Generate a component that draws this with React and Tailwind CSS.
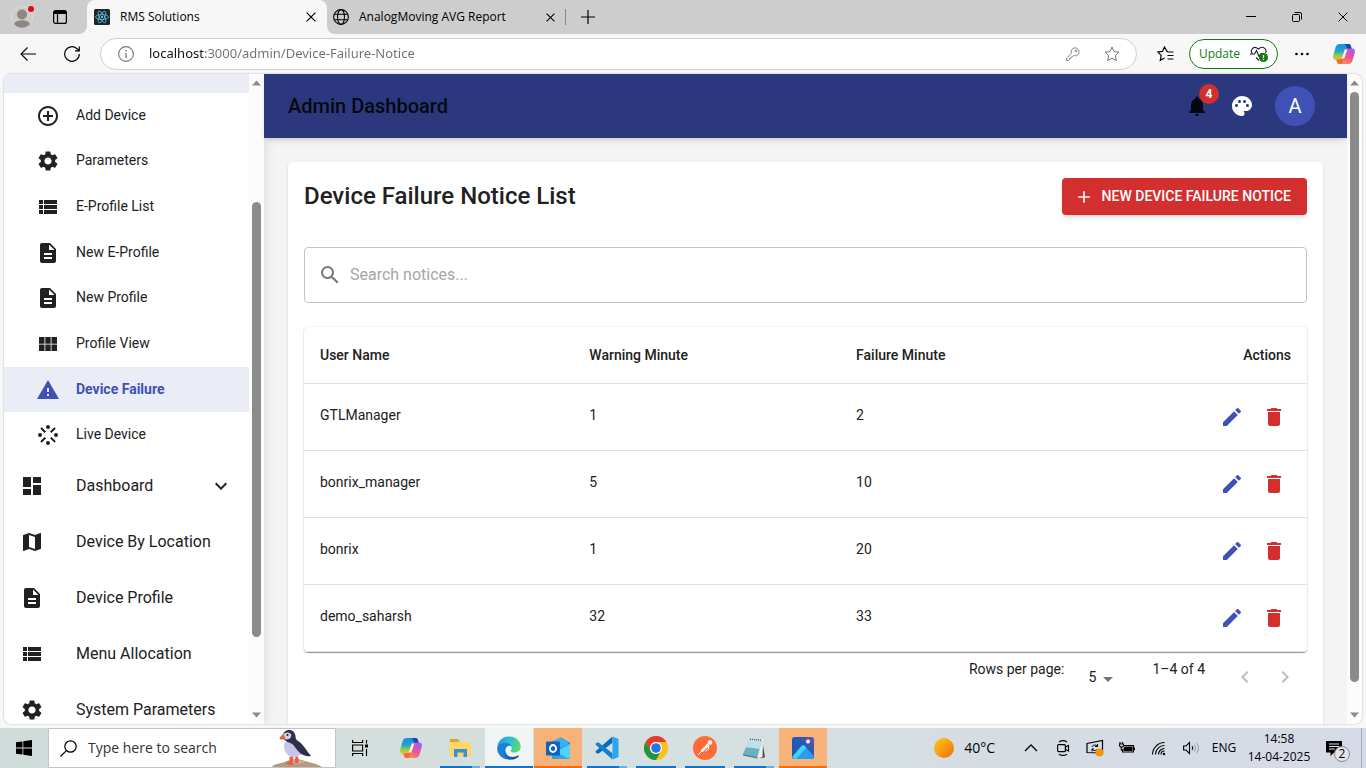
import React, { useState } from "react";
import {
  MdAdd,
  MdAddCircleOutline,
  MdArrowDropDown,
  MdDashboard,
  MdDelete,
  MdDescription,
  MdEdit,
  MdExpandMore,
  MdKeyboardArrowLeft,
  MdKeyboardArrowRight,
  MdMap,
  MdNotifications,
  MdPalette,
  MdSearch,
  MdSettings,
  MdStream,
  MdViewList,
  MdWarning,
} from "react-icons/md";

// Module grid with the narrow gutters
const ModuleIcon = ({ className }) => (
  <svg viewBox="0 0 24 24" fill="currentColor" className={className} aria-hidden="true">
    <path d="M3 5h5.500v6.700H3zM9.300 5h5.400v6.700H9.300zM15.500 5H21v6.700h-5.500zM3 12.500h5.500V19H3zM9.300 12.500h5.400V19H9.300zM15.500 12.500H21V19h-5.500z" />
  </svg>
);

// Row list with the narrow left column
const ListIcon = ({ className }) => (
  <svg viewBox="0 0 24 24" fill="currentColor" className={className} aria-hidden="true">
    <path d="M3 14h4v-4H3v4zm0 5h4v-4H3v4zM3 9h4V5H3v4zm5 5h13v-4H8v4zm0 5h13v-4H8v4zM8 5v4h13V5H8z" />
  </svg>
);

const SUB_MENU = [
  { name: "Add Device", icon: MdAddCircleOutline },
  { name: "Parameters", icon: MdSettings },
  { name: "E-Profile List", icon: ListIcon },
  { name: "New E-Profile", icon: MdDescription },
  { name: "New Profile", icon: MdDescription },
  { name: "Profile View", icon: ModuleIcon },
  { name: "Device Failure", icon: MdWarning, active: true },
  { name: "Live Device", icon: MdStream },
];

const MAIN_MENU = [
  { name: "Dashboard", icon: MdDashboard, expandable: true },
  { name: "Device By Location", icon: MdMap },
  { name: "Device Profile", icon: MdDescription },
  { name: "Menu Allocation", icon: MdViewList },
  { name: "System Parameters", icon: MdSettings },
];

const NOTICES = [
  { user: "GTLManager", warning: 1, failure: 2 },
  { user: "bonrix_manager", warning: 5, failure: 10 },
  { user: "bonrix", warning: 1, failure: 20 },
  { user: "demo_saharsh", warning: 32, failure: 33 },
];

/* ---------- Small drawings ---------- */

const Line = ({ size = 16, box = 16, width = 1, className = "", children }) => (
  <svg
    width={size}
    height={size}
    viewBox={`0 0 ${box} ${box}`}
    fill="none"
    stroke="currentColor"
    strokeWidth={width}
    className={`shrink-0 ${className}`}
    aria-hidden="true"
  >
    {children}
  </svg>
);

const CloseIcon = ({ size = 10, width = 1.2 }) => (
  <Line size={size} box={10} width={width}>
    <path d="M0.6 0.6l8.8 8.8M9.4 0.6L0.6 9.4" />
  </Line>
);

const ReactLogo = () => (
  <svg width="16" height="16" viewBox="0 0 16 16" fill="none" stroke="#58c4dc" strokeWidth="0.8" className="shrink-0" aria-hidden="true">
    <rect width="16" height="16" rx="1.5" fill="#20232a" stroke="none" />
    <ellipse cx="8" cy="8" rx="6.5" ry="2.5" />
    <ellipse cx="8" cy="8" rx="6.5" ry="2.5" transform="rotate(60 8 8)" />
    <ellipse cx="8" cy="8" rx="6.5" ry="2.5" transform="rotate(120 8 8)" />
    <circle cx="8" cy="8" r="1.2" fill="#58c4dc" stroke="none" />
  </svg>
);

const CopilotLogo = ({ id }) => (
  <svg width="24" height="24" viewBox="0 0 24 24" className="shrink-0" aria-hidden="true">
    <defs>
      <linearGradient id={`${id}-a`} x1="0" y1="0" x2="0" y2="1">
        <stop offset="0" stopColor="#1b8ce8" />
        <stop offset="0.45" stopColor="#22a7c9" />
        <stop offset="0.7" stopColor="#8ecb4a" />
        <stop offset="1" stopColor="#f6c21c" />
      </linearGradient>
      <linearGradient id={`${id}-b`} x1="0.7" y1="0" x2="0.2" y2="1">
        <stop offset="0" stopColor="#a35cf0" />
        <stop offset="0.5" stopColor="#f0568c" />
        <stop offset="1" stopColor="#ff9a4a" />
      </linearGradient>
    </defs>
    <path d="M8 2h8.500c1.300 0 2 .8 2.400 2l.8 3h-3.200c-1.500 0-2.300.8-2.700 2.200L12 15.500C11.300 17.500 10.300 18 8.500 18H4C1.500 18 .6 16.200 1.300 13.500l2.200-8C4.200 3 5.500 2 8 2z" fill={`url(#${id}-a)`} />
    <path d="M13.500 2h3c1.300 0 2 .8 2.400 2l.8 3h-4.500c-1-3-1.300-5-4.200-5z" fill="#1748b0" />
    <path d="M16 22H7.500c-1.300 0-2-.8-2.400-2l-.8-2.500h3.200c1.500 0 2.300-.8 2.700-2.200L12 9c.7-2 1.700-2.500 3.500-2.500H20c2.500 0 3.400 1.800 2.700 4.500l-2.200 7.500C19.800 21 18.500 22 16 22z" fill={`url(#${id}-b)`} />
    <path d="M4.300 17.500h3.200c1.500 0 2.300-.8 2.700-2.200l.8-2.300c0 4 .5 9-3 9-1.600 0-2.500-.5-2.900-2z" fill="#f0683c" />
    <path d="M12.800 7.500h2.600l-3.200 9H8.600c1-.4 1.400-.9 1.700-1.800z" fill="#f7f7f7" />
  </svg>
);

const ExplorerLogo = () => (
  <svg width="24" height="24" viewBox="0 0 24 24" aria-hidden="true">
    <path d="M2 3h8l2 3h10v4H2z" fill="#e0a526" />
    <path d="M1.500 6H23v14H1.500z" fill="#ffd766" />
    <path d="M6 13h13v8h-3.500v-4.500h-6V21H6z" fill="#3b8fd9" />
  </svg>
);

const EdgeLogo = () => (
  <svg width="24" height="24" viewBox="0 0 24 24" aria-hidden="true">
    <defs>
      <linearGradient id="edge-top" x1="0" y1="0.3" x2="1" y2="0.5">
        <stop offset="0" stopColor="#1f9bde" />
        <stop offset="0.55" stopColor="#2fc3cf" />
        <stop offset="1" stopColor="#62dd5a" />
      </linearGradient>
      <linearGradient id="edge-low" x1="0" y1="0" x2="1" y2="1">
        <stop offset="0" stopColor="#1b82d6" />
        <stop offset="1" stopColor="#114a8b" />
      </linearGradient>
    </defs>
    <path d="M0.300 11C1 5 5.500 0.500 12 0.500c7 0 11.700 4.800 11.700 10 0 3.700-2.800 6-6 6-2.500 0-4-1-4-1.800 0-.6 1-1 1-2.900 0-2.200-2.200-4.300-5.700-4.300C5 7.500 1.500 9 0.300 11z" fill="url(#edge-top)" />
    <path d="M0.300 11.500C1 8.500 4.500 7 8.500 7c3.500 0 5.800 1.800 6.200 4-.8-1-1.900-1.500-3-1.300-3.400.8-4.400 5.300-2 8.800 2.600 3.800 7.800 3.500 11.600 1C19 22 16 23.500 12 23.500 4.800 23.500-.5 17.500.3 11.500z" fill="#1b7fd3" />
    <path d="M8.500 11.500c-1.500 4 .5 8.500 5 9.300 3 .5 5.800-.3 7.800-1.300.7-.3 1 .2.600.7C19.500 23 16 24 12.500 23.500 7 22 5 15 8.500 11.500z" fill="url(#edge-low)" />
  </svg>
);

const OutlookLogo = () => (
  <svg width="26" height="24" viewBox="0 0 26 24" aria-hidden="true">
    <path d="M7 6l9-4.500L25 7v14c0 1-.6 1.600-1.600 1.600H8.500C7.500 22.600 7 22 7 21z" fill="#1467b8" />
    <path d="M9 5l7-3.500L23.500 6v8L16 17z" fill="#37b2ee" />
    <path d="M7 13l18-5.500V21c0 1-.6 1.600-1.600 1.600H8.500C7.500 22.600 7 22 7 21z" fill="#28a8ea" />
    <path d="M25 8v13c0 1-.6 1.600-1.600 1.600L11 16z" fill="#50d0fa" />
    <rect x="1" y="5.500" width="14" height="14" rx="1.200" fill="#0f63bd" />
    <ellipse cx="8" cy="12.500" rx="3.100" ry="3.500" fill="none" stroke="#fff" strokeWidth="1.800" />
  </svg>
);

const VsCodeLogo = () => (
  <svg width="24" height="24" viewBox="0 0 24 24" aria-hidden="true">
    <path d="M17.500 0.500v6.300L3.300 17.800 0.600 16.400v-1.200z" fill="#0a6ab5" />
    <path d="M17.500 23.500v-6.300L3.300 6.200 0.600 7.600v1.200z" fill="#1181cc" />
    <path d="M17.500 0.500L23.500 3v18l-6 2.500z" fill="#2ba5f0" />
  </svg>
);

const ChromeLogo = () => (
  <svg width="24" height="24" viewBox="0 0 24 24" aria-hidden="true">
    <circle cx="12" cy="12" r="12" fill="#fbc116" />
    <path d="M1.600 6A12 12 0 0 1 22.400 6H12a6 6 0 0 0-5.200 9z" fill="#e33b2e" />
    <path d="M1.600 6A12 12 0 0 0 12 24l5.200-9A6 6 0 0 1 6.800 15z" fill="#229342" />
    <circle cx="12" cy="12" r="6" fill="#fff" />
    <circle cx="12" cy="12" r="4.800" fill="#2b72e8" />
  </svg>
);

const PostmanLogo = () => (
  <svg width="24" height="24" viewBox="0 0 24 24" aria-hidden="true">
    <circle cx="12" cy="12" r="12" fill="#ff6c37" />
    <circle cx="17" cy="6.500" r="2.300" fill="#fff" />
    <path d="M14.500 7.500l2 2-6.500 6.200-2.300.4.500-2.100z" fill="#fff" />
    <path d="M15 9.500l.8 3.300-3.300 2.500M8 16l-3 3" fill="none" stroke="#fff" strokeWidth="1" />
  </svg>
);

const NotepadLogo = () => (
  <svg width="24" height="24" viewBox="0 0 24 24" aria-hidden="true">
    <path d="M20 4l3 17-2 1-4-1z" fill="#5a4a38" />
    <path d="M9 2.500l12 1L20.500 21l-5 .5z" fill="#eceff0" />
    <path d="M7.500 3l12.500 1-4.500 17L1 18z" fill="#6fafc2" />
    <path d="M7.500 3l12.500 1-2.500 9-14-2z" fill="#c3e0e8" />
    <path d="M1 18l14.500 3-.5 1.500L1 19.500z" fill="#3f7f93" />
    <path d="M8 3.200l12 1" stroke="#4a5358" strokeWidth="1.200" strokeDasharray="1 1" />
  </svg>
);

const PhotosLogo = () => (
  <svg width="22" height="22" viewBox="0 0 22 22" aria-hidden="true">
    <defs>
      <linearGradient id="photos-bg" x1="0" y1="1" x2="1" y2="0">
        <stop offset="0" stopColor="#1359b5" />
        <stop offset="0.6" stopColor="#2559b4" />
        <stop offset="1" stopColor="#7a4fae" />
      </linearGradient>
    </defs>
    <rect width="22" height="22" rx="2.500" fill="url(#photos-bg)" />
    <path d="M0.500 19.500L9.500 9c1-1.100 2.300-1.100 3.300 0L22 19c-.4 2-1.200 3-3 3H3c-1.500 0-2.500-1-2.500-2.500z" fill="#2b9df0" />
    <path d="M0.500 19.500L9.500 9c1-1.100 2.300-1.100 3.300 0l1.700 1.800L4 22H3c-1.500 0-2.500-1-2.500-2.500z" fill="#43d0f2" />
    <circle cx="16" cy="4.500" r="2" fill="#fff" />
  </svg>
);

const Puffin = () => (
  <svg width="54" height="38" viewBox="0 0 54 38" className="shrink-0" aria-hidden="true">
    <path d="M0 38c2-4 10-3 15-6 6-2.500 13-2 18 0 6 2 13 3 17 6z" fill="#b39a80" />
    <path d="M17 32c6-2 12-1 16 1l-8 2z" fill="#cdb79e" />
    <path d="M13 13c-2 4-1 10 3 13 4 3 9 3 12 0l7-1-6-11-9-5z" fill="#c5c6ea" />
    <path d="M11 6c1-6 10-7 12-1 1 3 0 5 3 7 6 4 8 9 13 15-4 1-9-1-12-4-4-4-5-8-10-9.500C13 12 11 10 11 6z" fill="#2d3048" />
    <path d="M11 6.500c1-3.500 6-4 8-1.500 1 2.500-1 5.500-4 5.500-2 0-4-1-4-4z" fill="#d3cfe8" />
    <circle cx="15.500" cy="6" r="1" fill="#1d1d28" />
    <path d="M11.500 5.500C9.500 6 8 7.500 7.500 10c2 .8 4.500.7 6-.5z" fill="#ee5a3a" />
    <path d="M18 28v4.500l-4 2 6 1 1-7zM24 28l-1 5 3 1v-5.500z" fill="#f05a40" stroke="#f05a40" />
  </svg>
);

/* ---------- Browser frame ---------- */

const TabStrip = () => (
  <div className="flex h-[34px] shrink-0 bg-[#f7f7f7] text-xs text-black">
    <div className="flex w-[87px] shrink-0 items-center gap-5 rounded-br-lg bg-[#cdcdcd] pl-[11px]">
      <button type="button" aria-label="Profile" className="relative">
        <svg width="22" height="22" viewBox="0 0 22 22" aria-hidden="true">
          <circle cx="11" cy="11" r="10.500" fill="#cfccc8" stroke="#dedbd7" />
          <circle cx="11" cy="8.500" r="5" fill="#8b8783" />
          <path d="M3 18c2-5 14-5 16 0-4 5-12 5-16 0z" fill="#8b8783" />
        </svg>
        <span className="absolute top-0 -right-px h-[6px] w-[6px] rounded-full bg-[#e50914]" />
      </button>
      <button type="button" aria-label="Tab actions">
        <Line size={14} box={14} width={1.200}>
          <rect x="0.600" y="0.600" width="12.800" height="12.800" rx="2" />
          <path d="M1 2.500h12" strokeWidth="3" />
          <path d="M4.500 3v10" />
        </Line>
      </button>
    </div>
    <div className="w-[240px] shrink-0 bg-[#cdcdcd]">
      <div className="flex h-full items-center rounded-t-lg bg-[#f7f7f7] pr-[11px] pl-[7px]">
        <ReactLogo />
        <span className="flex-1 truncate pl-[10px]">RMS Solutions</span>
        <button type="button" aria-label="Close tab">
          <CloseIcon />
        </button>
      </div>
    </div>
    <div className="flex min-w-0 flex-1 items-center rounded-bl-lg bg-[#cdcdcd]">
      <div className="flex w-[239px] shrink-0 items-center border-r border-[#8a8a8a] pr-[10px] pl-[6px]">
        <Line width={1.100}>
          <circle cx="8" cy="8" r="7.400" />
          <ellipse cx="8" cy="8" rx="3.500" ry="7.400" />
          <path d="M1.300 5.300h13.400M1.300 10.700h13.400" />
        </Line>
        <span className="flex-1 truncate pl-[10px]">AnalogMoving AVG Report</span>
        <button type="button" aria-label="Close tab">
          <CloseIcon size={9} />
        </button>
      </div>
      <button type="button" aria-label="New tab" className="ml-[15px]">
        <Line size={14} box={14} width={1.200}>
          <path d="M7 0v14M0 7h14" />
        </Line>
      </button>
      <div className="ml-auto flex h-full">
        <button type="button" aria-label="Minimize" className="flex w-[46px] items-center justify-center">
          <Line size={10} box={10}>
            <path d="M0 4.500h10" />
          </Line>
        </button>
        <button type="button" aria-label="Restore" className="flex w-[46px] items-center justify-center">
          <Line size={10} box={10}>
            <rect x="0.500" y="2.500" width="7" height="7" rx="1" />
            <path d="M2.500 0.500h5.500a1.500 1.500 0 0 1 1.500 1.500v5.500" />
          </Line>
        </button>
        <button type="button" aria-label="Close" className="flex w-[46px] items-center justify-center">
          <CloseIcon width={1} />
        </button>
      </div>
    </div>
  </div>
);

const STAR = "M8 1l2.100 4.600 4.900.6-3.600 3.400.9 5L8 12.200 3.700 14.600l.9-5L1 6.200l4.900-.6z";

const AddressBar = () => (
  <div className="flex h-10 shrink-0 items-center bg-[#f7f7f7]">
    <button type="button" aria-label="Back" className="ml-5">
      <Line width={1.100}>
        <path d="M16 8H1M7.500 1.500L1 8l6.500 6.500" />
      </Line>
    </button>
    <button type="button" aria-label="Reload" className="ml-7">
      <Line width={1.200}>
        <path d="M15.300 8A7.300 7.300 0 1 1 13 2.700L15 4.700M15.300 0.500v4.300H11" />
      </Line>
    </button>
    <div className="ml-5 flex h-8 min-w-0 flex-1 items-center rounded-full border border-[#cfcfcf] bg-white pr-4 pl-[17px] text-[#767676]">
      <Line width={1.100}>
        <circle cx="8" cy="8" r="7.400" />
        <path d="M8 7v5M8 4v1.500" strokeWidth="1.300" />
      </Line>
      <input
        type="text"
        aria-label="Address"
        defaultValue="localhost:3000/admin/Device-Failure-Notice"
        className="ml-[15px] min-w-0 flex-1 bg-[linear-gradient(90deg,#111111_56px,#707070_56px)] bg-clip-text font-['Noto_Sans',sans-serif] text-[13px] text-transparent outline-none"
      />
      <button type="button" aria-label="Saved passwords" className="text-[#8a8a8a]">
        <Line size={14} box={14}>
          <path d="M9 0.800a4 4 0 1 1-1.500 7.700L6 10H4.800v1.300H3.500v1.200L2.500 13.500H0.600v-2.300L5.500 6.300A4 4 0 0 1 9 0.800z" />
          <circle cx="10" cy="4" r="0.900" />
        </Line>
      </button>
      <button type="button" aria-label="Add to favorites" className="ml-6">
        <Line>
          <path d={STAR} />
        </Line>
      </button>
    </div>
    <button type="button" aria-label="Favorites" className="ml-5">
      <Line size={17} box={17} width={1.200}>
        <path d="M11 5.600l-.9-.1L7.500 1 5.400 5.400.8 6l3.400 3.400-.9 4.900 4.200-2.300M10.500 6h6M10.500 9.500h6M10.500 13h6" />
      </Line>
    </button>
    <button
      type="button"
      className="ml-[15px] flex h-[30px] w-[89px] items-center justify-center gap-[10px] rounded-full border border-[#107c10] bg-white text-xs text-[#107c10]"
    >
      Update
      <svg width="18" height="16" viewBox="0 0 18 16" fill="none" stroke="#222" strokeWidth="1.100" aria-hidden="true">
        <path d="M9 14.500L6 11.500M2.500 7.800C-.5 4.500 3.500-1.200 8.300 3c4.700-4.200 9.200.5 7.200 4" />
        <path d="M0 8h4.500L6.500 4.500l2.500 6 2-3h1.500" />
        <circle cx="13.500" cy="11.500" r="4.500" fill="#107c10" stroke="none" />
        <path d="M13.500 9v3M13.500 13v1" stroke="#fff" strokeWidth="1.300" />
      </svg>
    </button>
    <button type="button" aria-label="Settings and more" className="ml-4">
      <svg width="16" height="4" viewBox="0 0 16 4" aria-hidden="true">
        <circle cx="2.500" cy="2" r="1.300" />
        <circle cx="8" cy="2" r="1.300" />
        <circle cx="13.500" cy="2" r="1.300" />
      </svg>
    </button>
    <button type="button" aria-label="Copilot" className="mr-[10px] ml-[22px]">
      <CopilotLogo id="cp-bar" />
    </button>
  </div>
);

// before / thumb / after are shares of the track height
const ScrollBar = ({ before, thumb, after }) => (
  <div className="flex w-[15px] shrink-0 flex-col items-center bg-[#fcfcfc] py-[6px]" aria-hidden="true">
    <svg width="9" height="6" viewBox="0 0 9 6" className="mb-[6px] shrink-0">
      <path d="M0 5.500L4.500 0.500 9 5.500z" fill="#8b8b8b" />
    </svg>
    <div className="flex w-[9px] flex-1 flex-col">
      <div style={{ flexGrow: before }} />
      <div className="rounded-full bg-[#8b8b8b]" style={{ flexGrow: thumb }} />
      <div style={{ flexGrow: after }} />
    </div>
    <svg width="9" height="6" viewBox="0 0 9 6" className="mt-[6px] shrink-0">
      <path d="M0 0.500L4.500 5.500 9 0.500z" fill="#8b8b8b" />
    </svg>
  </div>
);

/* ---------- Admin app ---------- */

const Sidebar = () => (
  <aside className="z-10 flex shrink-0 bg-white shadow-[0_0_12px_rgba(0,0,0,0.12)]">
    <nav className="w-[245px] overflow-hidden text-[#212121]">
      <div className="h-[19px] bg-[#eaecf6]" />
      <ul className="grid h-[365px] auto-rows-fr">
        {SUB_MENU.map(({ name, icon: Icon, active }) => (
          <li key={name} className="flex">
            <a
              href="#"
              className={`flex flex-1 items-center gap-4 pl-8 text-sm ${
                active ? "bg-[#eaecf6] font-bold text-[#3f51b5]" : ""
              }`}
            >
              <Icon className="h-6 w-6 shrink-0" />
              <span className="pb-[2px]">{name}</span>
            </a>
          </li>
        ))}
      </ul>
      <ul>
        {MAIN_MENU.map(({ name, icon: Icon, expandable }) => (
          <li key={name}>
            <a href="#" className="flex h-14 items-center px-4 text-base">
              <Icon className="mr-8 h-6 w-6 shrink-0" />
              <span className="flex-1 whitespace-nowrap">{name}</span>
              {expandable && <MdExpandMore className="h-6 w-6 shrink-0" />}
            </a>
          </li>
        ))}
      </ul>
    </nav>
    <ScrollBar before={110} thumb={435} after={69} />
  </aside>
);

const AppHeader = () => (
  <header className="z-20 flex h-16 shrink-0 items-center bg-[#2b387e] pr-8 pl-6 shadow-md">
    <h1 className="flex-1 text-xl font-medium text-[#060811]">Admin Dashboard</h1>
    <div className="flex items-center gap-[21px]">
      <button type="button" aria-label="Notifications" className="relative text-[#060811]">
        <MdNotifications className="h-6 w-6" />
        <span className="absolute -top-[10px] -right-[10px] flex h-5 w-5 items-center justify-center rounded-full bg-[#d32f2f] text-xs font-bold text-white">
          4
        </span>
      </button>
      <button type="button" aria-label="Theme" className="text-white">
        <MdPalette className="h-6 w-6" />
      </button>
      <button
        type="button"
        className="flex h-10 w-10 items-center justify-center rounded-full bg-[#3f51b5] text-xl text-white"
      >
        A
      </button>
    </div>
  </header>
);

const NoticeTable = ({ rows }) => (
  <div className="mt-6 rounded shadow-[0_1px_1px_rgba(0,0,0,0.4),0_0_2px_rgba(0,0,0,0.16)]">
    <table className="w-full table-fixed border-collapse text-left text-sm">
      <thead>
        <tr className="h-14 border-b border-[#e0e0e0]">
          <th className="w-[26.85%] px-4 font-medium">User Name</th>
          <th className="w-[26.6%] px-4 font-medium">Warning Minute</th>
          <th className="px-4 font-medium">Failure Minute</th>
          <th className="px-4 text-right font-medium">Actions</th>
        </tr>
      </thead>
      <tbody>
        {rows.map((row) => (
          <tr key={row.user} className="h-[67px] border-b border-[#e0e0e0]">
            <td className="px-4 pb-1">{row.user}</td>
            <td className="px-4 pb-1">{row.warning}</td>
            <td className="px-4 pb-1">{row.failure}</td>
            <td className="px-4">
              <div className="flex justify-end gap-2">
                <button type="button" aria-label={`Edit ${row.user}`} className="p-[5px] text-[#3f51b5]">
                  <MdEdit className="h-6 w-6" />
                </button>
                <button type="button" aria-label={`Delete ${row.user}`} className="p-[5px] text-[#d32f2f]">
                  <MdDelete className="h-6 w-6" />
                </button>
              </div>
            </td>
          </tr>
        ))}
      </tbody>
    </table>
  </div>
);

const Pagination = ({ count }) => (
  <div className="flex h-[50px] items-center justify-end pr-[2px] text-sm">
    <label htmlFor="rows-per-page" className="mb-4">
      Rows per page:
    </label>
    <div className="relative mr-8 ml-2">
      <select id="rows-per-page" defaultValue="5" className="w-12 appearance-none bg-transparent pl-4 outline-none">
        <option>5</option>
        <option>10</option>
        <option>25</option>
      </select>
      <MdArrowDropDown className="pointer-events-none absolute top-0 right-0 h-6 w-6 text-[#757575]" />
    </div>
    <span className="mr-5 mb-4">{`1–${count} of ${count}`}</span>
    <button type="button" aria-label="Previous page" disabled className="p-2 text-[#bdbdbd]">
      <MdKeyboardArrowLeft className="h-6 w-6" />
    </button>
    <button type="button" aria-label="Next page" disabled className="p-2 text-[#bdbdbd]">
      <MdKeyboardArrowRight className="h-6 w-6" />
    </button>
  </div>
);

const FailureNotices = () => {
  const [query, setQuery] = useState("");
  const rows = NOTICES.filter((n) => n.user.toLowerCase().includes(query.toLowerCase()));

  return (
    <section className="flex-1 rounded-t bg-white p-4 shadow-sm">
      <div className="flex h-[37px] items-center justify-between">
        <h2 className="pb-[2px] text-2xl font-medium">Device Failure Notice List</h2>
        <button
          type="button"
          className="flex h-[37px] items-center gap-2 rounded bg-[#d32f2f] pr-4 pl-3 text-sm font-medium text-white uppercase shadow-md"
        >
          <MdAdd className="h-5 w-5" />
          <span className="pb-[2px]">New Device Failure Notice</span>
        </button>
      </div>
      <label className="mt-8 flex h-14 items-center gap-2 rounded border border-[#c4c4c4] px-[13px]">
        <MdSearch className="h-6 w-6 text-[#757575]" />
        <input
          type="text"
          aria-label="Search notices"
          placeholder="Search notices..."
          value={query}
          onChange={(e) => setQuery(e.target.value)}
          className="min-w-0 flex-1 text-base outline-none placeholder:text-[#a6a6a6]"
        />
      </label>
      <NoticeTable rows={rows} />
      <Pagination count={rows.length} />
    </section>
  );
};

/* ---------- Desktop taskbar ---------- */

const TASKS = [
  { name: "Copilot", logo: <CopilotLogo id="cp-task" />, bar: "" },
  { name: "File Explorer", logo: <ExplorerLogo />, bar: "mx-1 border-r-8 border-[#6aaee4] bg-[#0b74d1]" },
  { name: "Edge", logo: <EdgeLogo />, bg: "bg-[#f0f4f4]", bar: "bg-[#0b74d1]" },
  { name: "Outlook", logo: <OutlookLogo />, bg: "bg-[#f7b27a]", bar: "bg-[#f76b0a]" },
  { name: "VS Code", logo: <VsCodeLogo />, bar: "mx-1 border-r-8 border-[#6aaee4] bg-[#0b74d1]" },
  { name: "Chrome", logo: <ChromeLogo />, bar: "mx-1 bg-[#0b74d1]" },
  { name: "Postman", logo: <PostmanLogo />, bar: "mx-1 bg-[#0b74d1]" },
  { name: "Notepad", logo: <NotepadLogo />, bar: "mx-1 border-r-8 border-[#6aaee4] bg-[#0b74d1]" },
  { name: "Photos", logo: <PhotosLogo />, bg: "bg-[#f7b27a]", bar: "bg-[#f76b0a]" },
];

const TRAY = [
  {
    name: "Show hidden icons",
    icon: (
      <Line width={1.300}>
        <path d="M2 11l6-6 6 6" />
      </Line>
    ),
  },
  {
    name: "Meet now",
    icon: (
      <Line width={1.200}>
        <rect x="2.600" y="4.600" width="7.800" height="7" rx="1" />
        <path d="M10.500 7l3-1.500v5.500l-3-1.500M4 2c2.500-1.600 5.500-1.600 8 0M4 14.200c2.500 1.600 5.500 1.600 8 0" />
      </Line>
    ),
  },
  {
    name: "Windows Update",
    icon: (
      <Line size={18} box={18} width={1.200}>
        <path d="M1 4.500L16.500 1.500v12.500L1 13.500z" />
        <path d="M6 8c1-2.500 4.500-2.500 5.500-.5M11.500 5v2.500H9M11.500 10c-1 2-4.500 2-5.500 0M6 12.500V10h2" strokeWidth="1" />
        <circle cx="13.500" cy="13.500" r="4" fill="#f7930a" stroke="none" />
      </Line>
    ),
  },
  {
    name: "Battery",
    icon: (
      <Line width={1.100}>
        <path d="M5 5.500h9.500v6.500h-11V9.500" />
        <path d="M6 7h7v3.500H5V8.500z" fill="currentColor" />
        <path d="M15.500 7.500v2.500M1 2v2M3.500 2v2M0 4h4.500v2L2.300 7.500 0.500 6zM2.300 7.500V10h2" />
      </Line>
    ),
  },
  {
    name: "Network",
    icon: (
      <Line width={1.100}>
        <path d="M1.500 14.500C1.500 8 7 2.500 13.500 2.500M4.500 14.500c0-5 4-9 9-9M7.500 14.500c0-3.300 2.700-6 6-6M10 14.500c0-2 1.500-3.500 3.500-3.500" />
        <circle cx="13" cy="14" r="1.200" fill="currentColor" stroke="none" />
      </Line>
    ),
  },
  {
    name: "Volume",
    icon: (
      <Line width={1.100}>
        <path d="M0.600 6h2.400l3.500-3.500v11L3 10H0.600z" />
        <path d="M9 6c1 1.300 1 2.700 0 4" />
        <path d="M11 4.500c2 2.300 2 4.700 0 7M13.500 3c2.800 3.300 2.800 6.700 0 10" stroke="#9aa3aa" />
      </Line>
    ),
  },
];

const Taskbar = () => (
  <footer className="flex h-10 shrink-0 bg-linear-to-r from-[#d0dcd9] via-[#d5e0e0] to-[#d6dae6] text-black">
    <button type="button" aria-label="Start" className="flex w-12 shrink-0 items-center justify-center">
      <svg width="16" height="16" viewBox="0 0 16 16" aria-hidden="true">
        <path d="M0 2.300L6.500 1.400v6.200H0zM7.300 1.300L16 0v7.600H7.300zM0 8.400h6.500v6.200L0 13.700zM7.300 8.400H16V16l-8.700-1.300z" />
      </svg>
    </button>
    <label className="flex w-72 shrink-0 items-center border border-[#c3c3c3] bg-white pl-[11px]">
      <Line size={17} box={17} width={1.200}>
        <circle cx="10.500" cy="6.500" r="5.700" />
        <path d="M6.300 10.700L0.500 16.500" />
      </Line>
      <input
        type="text"
        aria-label="Type here to search"
        placeholder="Type here to search"
        className="ml-[11px] min-w-0 flex-1 text-sm outline-none placeholder:text-[#333333]"
      />
      <span className="mr-[9px]">
        <Puffin />
      </span>
    </label>
    <button type="button" aria-label="Task view" className="flex w-12 shrink-0 items-center justify-center">
      <Line width={1.200}>
        <path d="M0.600 0v2.500h10V0M0.600 16v-2.500h10V16M0.600 5h10v6h-10zM14.500 0v3.500M14.500 9v7" />
        <path d="M13 4.500h3v3h-3z" fill="currentColor" stroke="none" />
      </Line>
    </button>
    <div className="ml-[3px] flex gap-px">
      {TASKS.map(({ name, logo, bg, bar }) => (
        <button key={name} type="button" aria-label={name} className={`flex w-12 flex-col ${bg || ""}`}>
          <span className="flex flex-1 items-center justify-center self-stretch pt-[2px]">{logo}</span>
          <span className={`h-[2px] self-stretch ${bar}`} />
        </button>
      ))}
    </div>
    <div className="ml-auto flex shrink-0 items-stretch">
      <button type="button" className="flex items-center gap-[10px] pr-5 text-sm">
        <span className="h-5 w-5 rounded-full bg-linear-to-br from-[#fcc816] to-[#ee6d0c]" />
        40°C
      </button>
      {TRAY.map(({ name, icon }) => (
        <button key={name} type="button" aria-label={name} className="flex w-8 items-center justify-center">
          {icon}
        </button>
      ))}
      <button type="button" className="flex w-[34px] items-center justify-center text-xs">
        ENG
      </button>
      <button type="button" className="flex w-[76px] flex-col items-center justify-center text-xs leading-[18px]">
        <span>14:58</span>
        <span className="whitespace-nowrap">14-04-2025</span>
      </button>
      <button type="button" aria-label="Notifications" className="flex w-11 items-center justify-center">
        <span className="relative mr-[10px]">
          <svg width="16" height="16" viewBox="0 0 16 16" aria-hidden="true">
            <path d="M0 1h16v11.500H8L4.500 16v-3.500H0z" />
            <path d="M3 4h10M3 6.500h10M3 9h6" stroke="#d6dae6" />
          </svg>
          <span className="absolute top-[6px] left-2 flex h-4 w-4 items-center justify-center rounded-full border border-[#8b8b8b] bg-[#e3e5ea] text-xs leading-none">
            2
          </span>
        </span>
      </button>
      <span className="w-[5px] border-l border-[#a9adb8]" />
    </div>
  </footer>
);

const App = () => (
  <div className="flex h-screen flex-col overflow-hidden bg-[#f7f7f7] font-['Open_Sans','Noto_Sans',sans-serif]">
    <TabStrip />
    <AddressBar />
    <div className="mx-1 mb-1 flex min-h-0 flex-1 overflow-hidden rounded-lg bg-[#f4f4f4] font-[Roboto,sans-serif] text-[#212121] shadow-[0_0_2px_rgba(0,0,0,0.3)]">
      <Sidebar />
      <div className="z-20 flex min-w-0 flex-1 flex-col">
        <AppHeader />
        <main className="flex min-h-0 flex-1 flex-col overflow-hidden px-6 pt-6">
          <FailureNotices />
        </main>
      </div>
      <ScrollBar before={0} thumb={590} after={24} />
    </div>
    <Taskbar />
  </div>
);

export default App;
